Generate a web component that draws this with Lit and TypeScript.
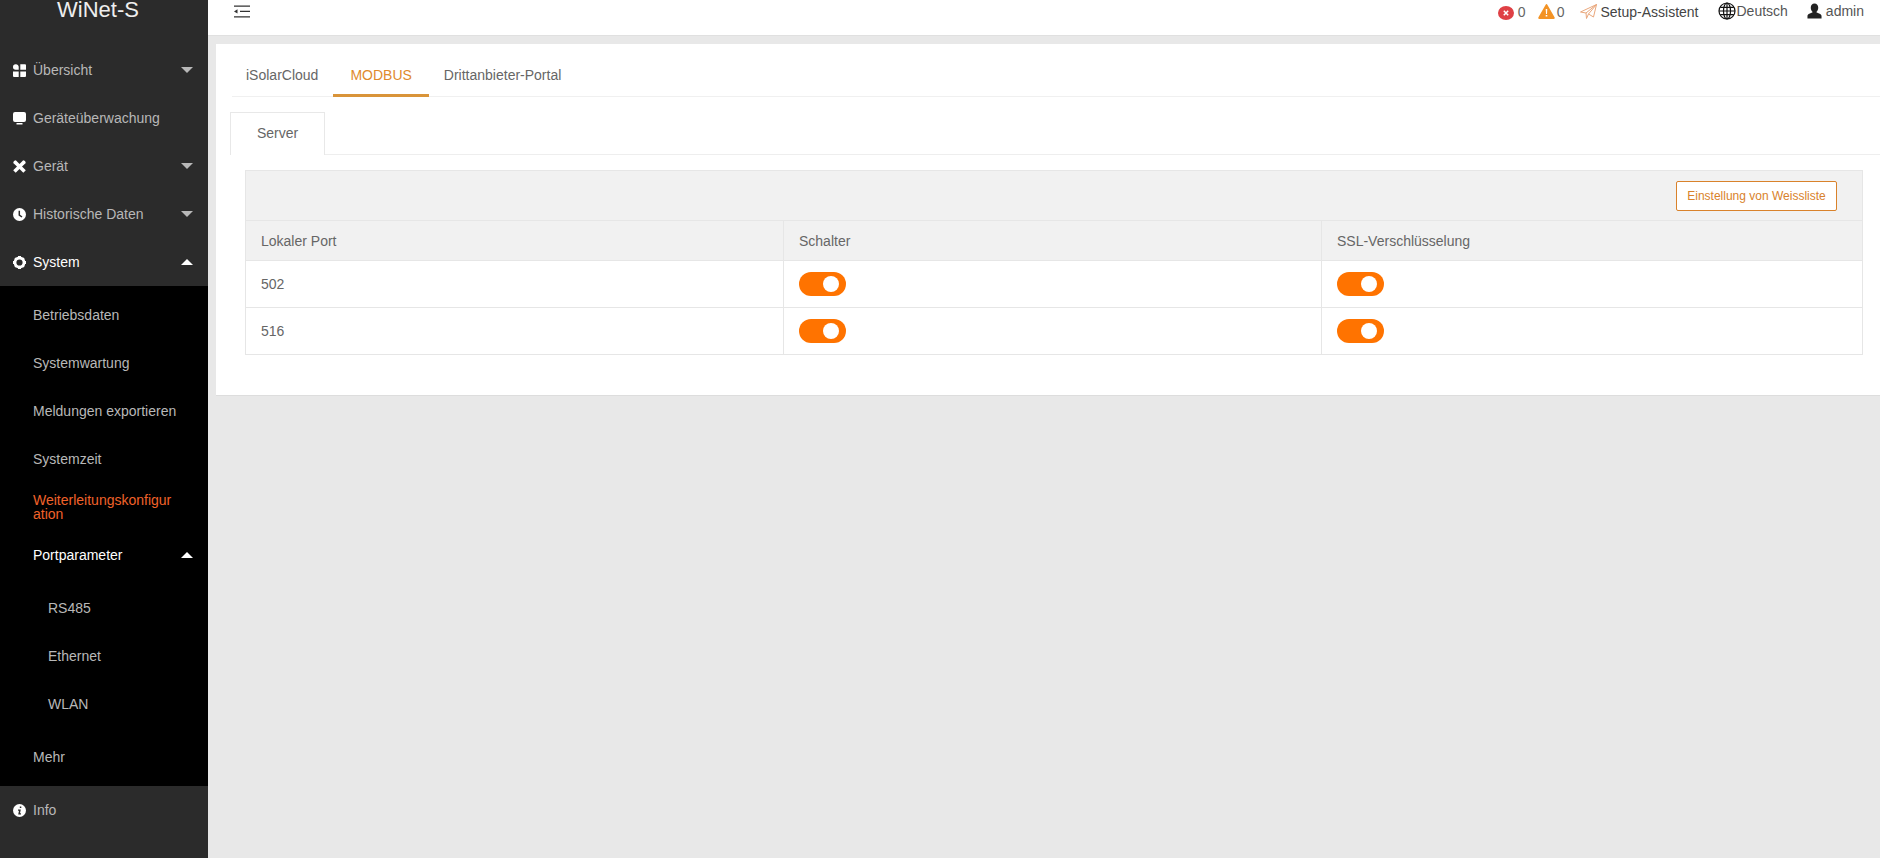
import { LitElement, html, css, svg } from "lit";
import { customElement } from "lit/decorators.js";

const icons: Record<string, any> = {
  grid: svg`<path d="M2.700 0.200A2.700 2.700 0 0 1 5.700 3V5.800H2.700A2.800 2.800 0 0 1 0 3A2.800 2.800 0 0 1 2.700 .2ZM7.300 .2H12Q13 .2 13 1.200V5.800H7.300ZM0 7.400H5.700V13H1Q0 13 0 12ZM7.300 7.400H13V12Q13 13 12 13H7.300Z" fill="#fff"/>`,
  monitor: svg`<path d="M2 0H11Q13 0 13 2V8Q13 10 11 10H2Q0 10 0 8V2Q0 0 2 0ZM3.500 11H9.500V12.500H3.500Z" fill="#fff"/>`,
  tools: svg`<path d="M2.800.3L6.500 4L10.200.3Q12.600 .6 12.800 2.900L9 6.500L12.800 10.300L10.300 12.800L6.500 9L2.700 12.800L.2 10.300L4 6.500L.2 2.900Q.4 .6 2.800 .3Z" fill="#fff"/>`,
  clock: svg`<circle cx="6.500" cy="6.500" r="6.500" fill="#fff"/><path d="M6.300 2.800V7L9 9" fill="none" stroke="#2b2b2b" stroke-width="1.500"/>`,
  gear: svg`<circle cx="6.500" cy="6.500" r="4.500" fill="none" stroke="#fff" stroke-width="2.800"/><path d="M5 0H8V2H5ZM5 11H8V13H5ZM0 5H2V8H0ZM11 5H13V8H11Z" fill="#fff"/><path d="M1.200 3L3 1.200L4.500 2.700L2.700 4.500ZM10 1.200L11.800 3L10.300 4.500L8.500 2.700ZM1.200 10L2.700 8.500L4.500 10.300L3 11.800ZM11.800 10L10 11.800L8.500 10.300L10.300 8.500Z" fill="#fff"/>`,
  info: svg`<circle cx="6.500" cy="6.500" r="6.500" fill="#fff"/><path d="M6.800 2.500h1.500v1.500H6.800ZM5 5.500H7.800L7 9.300H8V10.500H5.200L6 6.700H5Z" fill="#2b2b2b"/>`,
};

const caret = (up: boolean) =>
  html`<span class="caret ${up ? "up" : ""}"></span>`;

@customElement("app-root")
export class AppRoot extends LitElement {
  static styles = css`
    :host {
      display: block;
      font-family: "Liberation Sans", Arial, sans-serif;
      font-size: 14px;
      color: #666;
    }
    * { box-sizing: border-box; }
    .page { display: flex; width: 1880px; height: 858px; overflow: hidden; background: #e8e8e8; }
    .side { width: 208px; flex: none; display: flex; flex-direction: column; background: #2b2b2b; color: #b8b8b8; }
    .logo { height: 46px; padding-right: 12px; line-height: 20px; font-size: 22px; color: #eee; text-align: center; }
    .item { height: 48px; display: flex; align-items: center; padding: 0 15px 0 13px; }
    .item svg { width: 13px; height: 13px; margin-right: 7px; flex: none; }
    .item .label { flex: 1; }
    .item.open { color: #fff; }
    .caret { border-left: 6px solid transparent; border-right: 6px solid transparent; border-top: 6px solid #b8b8b8; }
    .caret.up { border-top: 0; border-bottom: 6px solid #fff; }
    .sub { background: #000; padding: 5px 0; }
    .sub .item { padding-left: 33px; }
    .sub .deep .item { padding-left: 48px; }
    .sub .deep { padding: 5px 0; }
    .active { color: #f0622a; }
    .active .label { line-height: 14px; word-break: break-all; padding-right: 18px; }
    .white { color: #fff; }
    .info { flex: 1; }
    .main { flex: 1; min-width: 0; display: flex; flex-direction: column; }
    .top { height: 36px; flex: none; background: #fff; border-bottom: 1px solid #e0e0e0; display: flex; justify-content: space-between; padding: 0 16px 12px 26px; color: #444; }
    .burger { width: 16px; height: 13px; margin-top: 5px; }
    .right { display: flex; align-items: center; height: 23px; }
    .group { display: flex; align-items: center; }
    .count { color: #666; }
    .count svg { margin-right: 3px; }
    .err { margin-right: 12px; }
    .err svg { margin-right: 4px; }
    .warn { margin-right: 16px; }
    .warn svg { margin-right: 2px; }
    .setup { margin-right: 19px; }
    .setup svg { margin-right: 3px; }
    .lang { margin-right: 19px; margin-top: -2px; color: #555; }
    .lang svg { margin-right: 1px; }
    .user { margin-top: -2px; color: #555; }
    .user svg { margin-right: 4px; }
    .card { margin: 8px 0 0 8px; height: 352px; background: #fff; border-bottom: 1px solid #ddd; padding: 0 17px 0 14px; }
    .tabs { display: flex; height: 53px; margin-left: 2px; margin-right: -17px; border-bottom: 1px solid #f0f0f0; }
    .tab { padding: 0 15px 0 14px; height: 53px; line-height: 62px; color: #666; }
    .tab.on { color: #e08a2e; padding: 0 17px; border-bottom: 3px solid #d99439; }
    .tab.last { padding-left: 15px; }
    .subtabs { display: flex; margin-top: 15px; margin-right: -17px; height: 43px; border-bottom: 1px solid #eee; }
    .stab { width: 95px; height: 43px; border: 1px solid #e8e8e8; border-bottom: 0; background: #fff; text-align: center; line-height: 41px; }
    .table { margin: 15px 0 0 15px; border: 1px solid #e6e6e6; border-bottom: 0; }
    .toolbar { height: 50px; background: #f1f1f1; display: flex; align-items: center; justify-content: flex-end; padding-right: 25px; border-bottom: 1px solid #e6e6e6; }
    .btn { width: 161px; height: 30px; background: #fff; border: 1px solid #d9822b; border-radius: 2px; color: #d9822b; font-size: 12px; display: flex; align-items: center; justify-content: center; }
    .row { display: grid; grid-template-columns: 537px 538px 1fr; border-bottom: 1px solid #e6e6e6; height: 47px; }
    .row.head { height: 40px; background: #f1f1f1; }
    .cell { display: flex; align-items: center; padding-left: 15px; border-left: 1px solid #e6e6e6; }
    .cell:first-child { border-left: 0; padding-left: 15px; }
    .toggle { width: 47px; height: 24px; border-radius: 12px; background: #ff7300; padding: 4px 7px 4px 24px; margin-top: -1px; }
    .toggle span { display: block; width: 16px; height: 16px; border-radius: 50%; background: #fff; }
  `;

  private ic(name: string) {
    return html`<svg viewBox="0 0 13 13">${icons[name]}</svg>`;
  }

  private top(name: string, label: string, c?: boolean, open = false) {
    return html`<div class="item ${open ? "open" : ""}">
      ${this.ic(name)}<span class="label">${label}</span>${c ? caret(open) : ""}
    </div>`;
  }

  private row(port: string) {
    const t = html`<div class="toggle"><span></span></div>`;
    return html`<div class="row"><div class="cell">${port}</div><div class="cell">${t}</div><div class="cell">${t}</div></div>`;
  }

  render() {
    return html`<div class="page">
      <aside class="side">
        <div class="logo">WiNet-S</div>
        ${this.top("grid", "Übersicht", true)}
        ${this.top("monitor", "Geräteüberwachung")}
        ${this.top("tools", "Gerät", true)}
        ${this.top("clock", "Historische Daten", true)}
        ${this.top("gear", "System", true, true)}
        <div class="sub">
          <div class="item">Betriebsdaten</div>
          <div class="item">Systemwartung</div>
          <div class="item">Meldungen exportieren</div>
          <div class="item">Systemzeit</div>
          <div class="item active"><span class="label">Weiterleitungskonfiguration</span></div>
          <div class="item white"><span class="label">Portparameter</span>${caret(true)}</div>
          <div class="deep">
            <div class="item">RS485</div>
            <div class="item">Ethernet</div>
            <div class="item">WLAN</div>
          </div>
          <div class="item">Mehr</div>
        </div>
        <div class="info">${this.top("info", "Info")}</div>
      </aside>
      <div class="main">
        <header class="top">
          <svg class="burger" viewBox="0 0 16 13">
            <path d="M0 .5H16V1.800H0ZM6 5.800H16V7.100H6ZM0 11.200H16V12.500H0Z" fill="#333"/>
            <path d="M0 6.400L3.500 4.200V8.600Z" fill="#333"/>
          </svg>
          <div class="right">
            <div class="group count err">
              <svg width="16" height="16" viewBox="0 0 16 16"><ellipse cx="8" cy="9" rx="8" ry="7" fill="#df4045"/><path d="M5.800 6.800L10.200 11.200M10.200 6.800L5.800 11.200" stroke="#fff" stroke-width="1.500"/></svg>0
            </div>
            <div class="group count warn">
              <svg width="17" height="15" viewBox="0 0 17 15"><path d="M8.500 0Q9 0 9.500 1L16.700 13.500Q17 15 15.500 15H1.500Q0 15 .3 13.500L7.500 1Q8 0 8.500 0Z" fill="#f39325"/><path d="M7.700 5H9.300L9 10H8ZM7.700 11H9.300V12.600H7.700Z" fill="#fff"/></svg>0
            </div>
            <div class="group setup">
              <svg width="17" height="15" viewBox="0 0 17 15"><path d="M.5 8L16.500 .5L13.500 13L8.500 10L6.500 14.500L6 9ZM6 9L16.500 .5L8.500 10" fill="none" stroke="#e9a77c" stroke-width="1"/></svg>Setup-Assistent
            </div>
            <div class="group lang">
              <svg width="18" height="18" viewBox="0 0 18 18" fill="none" stroke="#111" stroke-width="1.200"><circle cx="9" cy="9" r="8"/><ellipse cx="9" cy="9" rx="3.500" ry="8"/><path d="M9 1V17M1 9H17M2.200 5.300H15.800M2.200 12.700H15.800"/></svg>Deutsch
            </div>
            <div class="group user">
              <svg width="15" height="16" viewBox="0 0 16 16"><path d="M8 0C10.500 0 12 2 12 4.500C12 6.500 11 8 10 9C10.500 10.300 15 10.500 15.500 13V16H.5V13C1 10.500 5.500 10.300 6 9C5 8 4 6.500 4 4.500C4 2 5.500 0 8 0Z" fill="#222"/></svg>admin
            </div>
          </div>
        </header>
        <section class="card">
          <div class="tabs">
            <div class="tab">iSolarCloud</div>
            <div class="tab on">MODBUS</div>
            <div class="tab last">Drittanbieter-Portal</div>
          </div>
          <div class="subtabs"><div class="stab">Server</div></div>
          <div class="table">
            <div class="toolbar"><div class="btn">Einstellung von Weissliste</div></div>
            <div class="row head"><div class="cell">Lokaler Port</div><div class="cell">Schalter</div><div class="cell">SSL-Verschlüsselung</div></div>
            ${this.row("502")}
            ${this.row("516")}
          </div>
        </section>
      </div>
    </div>`;
  }
}
